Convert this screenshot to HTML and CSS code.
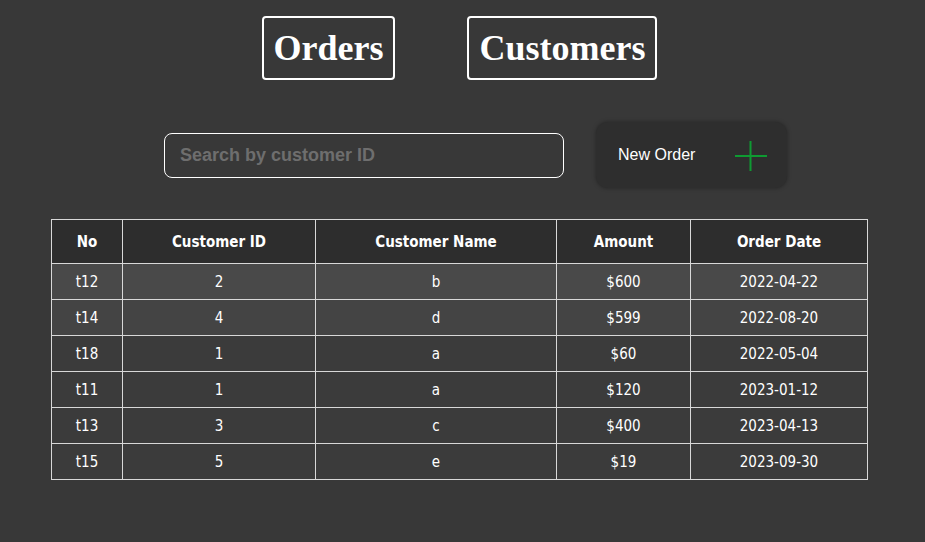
FILE: index.html
```html
<!DOCTYPE html>
<html>
<head>
<meta charset="utf-8">
<link rel="stylesheet" href="styles.css">
</head>
<body>
<div class="page">
  <nav class="tabs">
    <button class="tab">Orders</button>
    <button class="tab">Customers</button>
  </nav>
  <div class="toolbar">
    <input class="search" type="text" placeholder="Search by customer ID">
    <button class="new-order">
      <span>New Order</span>
      <svg class="plus" width="32" height="30" viewBox="0 0 32 30"><path d="M0 15H32M15.5 0V30" stroke="#0e9a32" stroke-width="2"/></svg>
    </button>
  </div>
  <table class="orders">
    <thead>
      <tr><th class="c1">No</th><th class="c2">Customer ID</th><th class="c3">Customer Name</th><th class="c4">Amount</th><th class="c5">Order Date</th></tr>
    </thead>
    <tbody>
      <tr class="r1"><td>t12</td><td>2</td><td>b</td><td>$600</td><td>2022-04-22</td></tr>
      <tr class="r2"><td>t14</td><td>4</td><td>d</td><td>$599</td><td>2022-08-20</td></tr>
      <tr><td>t18</td><td>1</td><td>a</td><td>$60</td><td>2022-05-04</td></tr>
      <tr><td>t11</td><td>1</td><td>a</td><td>$120</td><td>2023-01-12</td></tr>
      <tr><td>t13</td><td>3</td><td>c</td><td>$400</td><td>2023-04-13</td></tr>
      <tr><td>t15</td><td>5</td><td>e</td><td>$19</td><td>2023-09-30</td></tr>
    </tbody>
  </table>
</div>
</body>
</html>
```

FILE: styles.css
```css
html, body {
  margin: 0;
  padding: 0;
  background: #383838;
}
.page {
  width: 918px;
  padding-top: 16px;
}
.tabs {
  display: flex;
  justify-content: center;
  gap: 72px;
  margin-left: 1px;
}
.tab {
  font-family: "Liberation Serif", "Times New Roman", serif;
  font-weight: bold;
  font-size: 36px;
  color: #fff;
  background: transparent;
  border: 2px solid #fff;
  border-radius: 4px;
  height: 64px;
  padding: 0 10px;
  line-height: 1;
}
.toolbar {
  display: flex;
  align-items: center;
  gap: 32px;
  margin-top: 42px;
  padding-left: 164px;
}
.search {
  box-sizing: border-box;
  width: 400px;
  height: 45px;
  border: 1px solid #fff;
  border-radius: 8px;
  background: transparent;
  padding: 0 15px;
  font-family: "Liberation Sans", Arial, sans-serif;
  font-size: 18px;
  font-weight: bold;
  color: #fff;
  outline: none;
}
.search::placeholder {
  color: #6e6e6e;
}
.new-order {
  box-sizing: border-box;
  width: 191px;
  height: 66px;
  display: flex;
  align-items: center;
  justify-content: space-between;
  padding: 0 20px 0 22px;
  background: #2e2e2e;
  border: none;
  border-radius: 12px;
  box-shadow: 0 0 4px rgba(0,0,0,0.35);
  font-family: "Liberation Sans", Arial, sans-serif;
  font-size: 16px;
  color: #fff;
}
.plus {
  display: block;
  margin-top: 1px;
}
.orders {
  margin-top: 31px;
  margin-left: 51px;
  width: 817px;
  border-collapse: collapse;
  font-family: "DejaVu Sans Condensed", "DejaVu Sans", sans-serif;
  font-size: 15px;
  color: #fff;
  text-align: center;
}
.orders th, .orders td {
  border: 1px solid #d8d8d8;
  padding: 0;
}
.orders th {
  height: 43px;
  background: #2d2d2d;
  font-weight: bold;
}
.orders td {
  height: 35px;
  background: #3b3b3b;
}
.orders .r1 td { background: #494949; }
.orders .r2 td { background: #444444; }
.c1 { width: 70px; }
.c2 { width: 192px; }
.c3 { width: 240px; }
.c4 { width: 133px; }
.c5 { width: auto; }
```
